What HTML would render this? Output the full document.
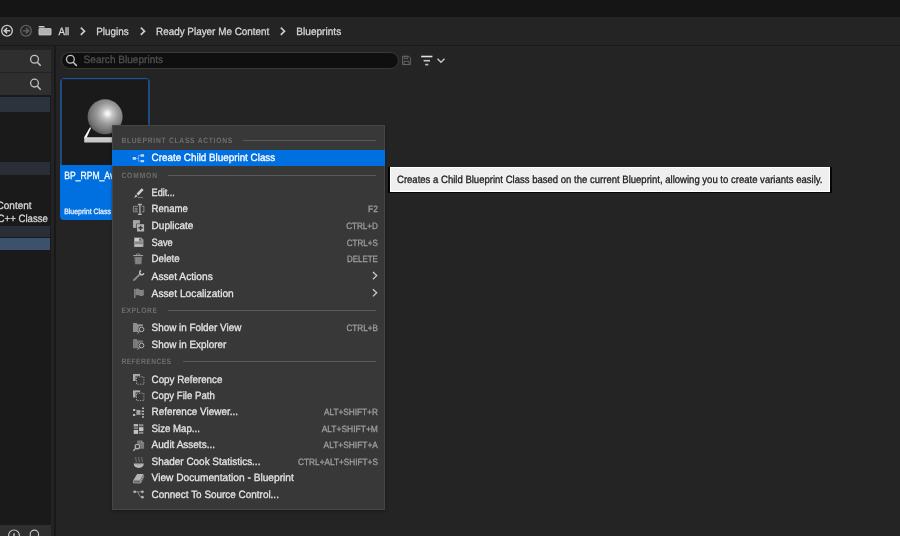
<!DOCTYPE html>
<html lang="en">
<head>
<meta charset="utf-8">
<title>Content Browser</title>
<style>
html,body{margin:0;padding:0;background:#242424;}
body{width:900px;height:536px;overflow:hidden;background:#242424;position:relative;font-family:"Liberation Sans",sans-serif;}
.abs,.t{position:absolute;}
.t{white-space:nowrap;display:block;transform-origin:0 0;-webkit-text-stroke:0.3px;}
.tl{position:absolute;left:0;top:0;width:900px;height:536px;will-change:transform;text-rendering:geometricPrecision;}
#topbar{left:0;top:0;width:900px;height:17px;background:#151515;}
#crumbs{left:0;top:17px;width:900px;height:28px;background:#242424;}
#hsep{left:0;top:45px;width:900px;height:1px;background:#1a1a1a;}
#leftpanel{left:0;top:46px;width:54px;height:490px;background:#232323;}
#tree{left:0;top:95px;width:51px;height:430px;background:#1a1a1a;}
.lrow{left:0;width:51px;background:#2f2f2f;}
.brow{left:0;width:50px;}
#vsep{left:54px;top:46px;width:2px;height:490px;background:#191919;}
#search{left:61.4px;top:52.2px;width:337.2px;height:16.8px;box-sizing:border-box;border:1px solid #393939;border-radius:9px;background:#0f0f0f;}
#tile{left:60px;top:77.6px;width:90.2px;height:142px;border-radius:4px;overflow:hidden;}
#tilebot{left:0;top:87px;width:90.2px;height:56px;background:#0070e0;}
#thumb{left:0;top:0;width:90.2px;height:87.2px;box-sizing:border-box;background:#1a1a1a;border:2px solid #1f4b7f;border-bottom:0;border-top:1px solid #2a5283;border-radius:4px 4px 0 0;}
#thumbin{left:0;right:0;top:0;height:1px;background:#0a2545;}
#menu{left:112px;top:125px;width:273.2px;height:384.7px;box-sizing:border-box;background:#383838;border:1px solid #464646;box-shadow:0 1px 3px rgba(0,0,0,.35);}
#hl{left:112px;top:149.8px;width:273.2px;height:15.8px;background:#0070e0;}
.hline{height:1px;background:#5a5a5a;}
#tip{left:388.2px;top:166.6px;width:443.6px;height:26.6px;background:#050505;}
#tipin{left:1.5px;top:0.2px;width:440.3px;height:25px;box-sizing:border-box;border:1.3px solid #ffffff;background:#efefef;}
svg{position:absolute;left:0;top:0;overflow:visible;}
</style>
</head>
<body>
<div id="topbar" class="abs"></div>
<div id="crumbs" class="abs"></div>
<div id="hsep" class="abs"></div>
<div id="leftpanel" class="abs"></div>
<div id="tree" class="abs"></div>
<div class="abs lrow" style="top:49.6px;height:22.3px"></div>
<div class="abs lrow" style="top:72.9px;height:21.9px"></div>
<div class="abs brow" style="top:96.7px;height:15.1px;background:#2d333c"></div>
<div class="abs brow" style="top:162.1px;height:12.5px;background:#2a2f37"></div>
<div class="abs brow" style="top:225.5px;height:11.1px;background:#2a2f37"></div>
<div class="abs brow" style="top:237.6px;height:12.1px;background:#3c516b"></div>
<div class="abs lrow" style="top:524.8px;height:11.2px"></div>
<div id="vsep" class="abs"></div>
<div id="search" class="abs"></div>
<div id="tile" class="abs"><div id="thumb" class="abs"><div id="thumbin" class="abs"></div></div><div id="tilebot" class="abs"></div></div>
<svg id="bgicons" width="900" height="536" viewBox="0 0 900 536">
<defs>
<radialGradient id="sph" cx="0.57" cy="0.41" r="0.62" fx="0.57" fy="0.41">
<stop offset="0" stop-color="#ffffff"/><stop offset="0.08" stop-color="#f0f0f0"/><stop offset="0.25" stop-color="#c2c2c2"/><stop offset="0.5" stop-color="#989898"/><stop offset="0.8" stop-color="#767676"/><stop offset="1" stop-color="#565656"/>
</radialGradient>
</defs>
<!-- back -->
<g fill="none" stroke="#c8c8c8" stroke-width="1.35">
<circle cx="7" cy="30.7" r="5.35"/>
<path d="M10.2 30.7H4.8M7.1 28L4.3 30.7L7.1 33.4" stroke-width="1.6"/>
</g>
<!-- forward -->
<g fill="none" stroke="#5e5e5e" stroke-width="1.35">
<circle cx="26" cy="30.7" r="5.35"/>
<path d="M22.8 30.7H28.2M25.9 28L28.7 30.7L25.9 33.4" stroke-width="1.6"/>
</g>
<!-- folder -->
<path d="M38.6 26.7Q38.6 26 39.3 26H43.5Q44.1 26 44.4 26.6L44.9 27.5H38.6Z" fill="#cdcdcd"/>
<rect x="38.9" y="28.5" width="12.2" height="6.5" rx="0.6" fill="#b2b2b2" stroke="#d2d2d2" stroke-width="0.7"/>
<!-- breadcrumb chevrons -->
<g fill="none" stroke="#cacaca" stroke-width="1.7">
<path d="M80.8 27.6L84.5 31.2L80.8 34.8"/>
<path d="M140.8 27.6L144.5 31.2L140.8 34.8"/>
<path d="M280.8 27.6L284.5 31.2L280.8 34.8"/>
</g>
<!-- search icons -->
<g fill="none" stroke="#c2c2c2" stroke-width="1.3">
<circle cx="34.5" cy="59.2" r="3.9"/><path d="M37.3 62.2L40.7 65.8" stroke-width="1.5"/>
<circle cx="34.5" cy="83.1" r="3.9"/><path d="M37.3 86.1L40.7 89.7" stroke-width="1.5"/>
<circle cx="70.4" cy="59.3" r="3.9"/><path d="M73.2 62.3L76.8 65.9" stroke-width="1.5"/>
</g>
<!-- save (dim) -->
<g fill="none" stroke="#666666" stroke-width="0.9">
<path d="M402.5 56.2H408.8L410.6 58V64.6H402.5Z"/>
<rect x="404.2" y="56.4" width="3.6" height="2.2"/>
<rect x="404" y="61.3" width="5" height="3.2"/>
</g>
<!-- filter -->
<g stroke="#e0e0e0" stroke-width="1.6" fill="none">
<path d="M421.1 56.5H432.4"/>
<path d="M423.6 60.7H430" stroke="#c8c8c8"/>
<path d="M425.2 64.6H428.3" stroke="#c0c0c0"/>
</g>
<path d="M437.5 58.8L441 62.3L444.5 58.8" fill="none" stroke="#c8c8c8" stroke-width="1.4"/>
<!-- bottom-left icons -->
<g fill="none" stroke="#c2c2c2" stroke-width="1.2">
<circle cx="14" cy="535.4" r="5.4"/>
<path d="M14 533.2V538" stroke-width="1.5"/>
<circle cx="34.4" cy="534.4" r="4.2"/>
</g>
<!-- thumbnail sphere + platform -->
<path d="M90 127.3L91 127.9L86.6 137.7H83.9Z" fill="#ffffff"/>
<path d="M84.2 137.8H126V142.4H84.2Z" fill="#c9c9c9"/>
<path d="M84.2 137.8H126" stroke="#f4f4f4" stroke-width="0.8"/>
<circle cx="105.1" cy="116.8" r="17.5" fill="url(#sph)"/>

</svg>
<div class="tl">
<span class="t" id="t7" style="left:64px;top:169px;font-size:10.6px;line-height:14px;color:#ffffff;transform:translateX(0.20px) scaleX(0.8119);">BP_RPM_Avatar</span>
<span class="t" id="t8" style="left:64px;top:206px;font-size:7.8px;line-height:11px;color:#e8f0ff;transform:translateX(0.20px) scaleX(0.8906);">Blueprint Class</span>
</div>
<div id="menu" class="abs"></div>
<div id="hl" class="abs"></div>
<div class="abs hline" style="left:243.3px;top:140.1px;width:132.7px"></div>
<div class="abs hline" style="left:168px;top:174.6px;width:208px"></div>
<div class="abs hline" style="left:168.3px;top:310px;width:207.7px"></div>
<div class="abs hline" style="left:183px;top:361px;width:193px"></div>
<div id="tip" class="abs"><div id="tipin" class="abs"></div></div>
<svg id="icons" width="900" height="536" viewBox="0 0 900 536">
<!-- create child -->
<g fill="#b9d8ff">
<rect x="132.7" y="157" width="3.3" height="2.8" rx="0.4"/>
<rect x="140.5" y="154.3" width="3.6" height="2.4" rx="0.3"/>
<rect x="140.5" y="159.9" width="3.6" height="2.4" rx="0.3"/>
</g>
<path d="M136 158.4H138.4M140.5 155.5H138.4V161.1H140.5" fill="none" stroke="#7db8ff" stroke-width="0.8"/>
<!-- edit pencil -->
<path d="M136.5 193.8L141.7 188.2L143.6 190L138.4 195.6Z" fill="#cecece"/>
<path d="M135.9 194.6L137.6 196.2L134 197.9Z" fill="#cecece"/>
<path d="M137.8 197.6H143" stroke="#8f8f8f" stroke-width="0.8"/>
<!-- rename -->
<path d="M138 206.3H133.4V211.8H138M141.8 206.3H143.9V211.8H141.8" fill="none" stroke="#949494" stroke-width="0.9"/>
<rect x="134.6" y="207.8" width="3" height="2.8" fill="#787878"/>
<path d="M137.9 204.5H141.9M137.9 214.3H141.9M139.9 204.5V214.3" stroke="#b0b0b0" stroke-width="1.3" fill="none"/>
<!-- duplicate -->
<rect x="133" y="220.1" width="6.9" height="7.8" fill="#a6a6a6"/>
<rect x="136.4" y="223.6" width="8.2" height="8.4" fill="#383838"/>
<rect x="137" y="224.2" width="7.1" height="7.3" fill="#b2b2b2"/>
<path d="M138.4 227.8H142.7M140.55 225.7V229.9" stroke="#383838" stroke-width="1.4"/>
<!-- save -->
<path d="M134 237.5H141.2L143.5 239.8V247H134Z" fill="#969696"/>
<rect x="134.8" y="238" width="4.2" height="3.2" fill="#cacaca"/>
<rect x="139.4" y="239" width="1.2" height="1.5" fill="#484848"/>
<rect x="135" y="242.2" width="7.4" height="1.6" fill="#848484"/>
<rect x="135" y="244.4" width="7.4" height="2.2" fill="#bebebe"/>
<!-- trash -->
<path d="M133.2 255.6H143.1" stroke="#aaaaaa" stroke-width="1"/>
<path d="M136.6 255V254H139.8V255" stroke="#949494" stroke-width="0.8" fill="none"/>
<path d="M134.4 257H142L141.5 264.3H134.9Z" fill="#767676"/>
<path d="M136.4 257.6V263.6M138.2 257.6V263.6M140 257.6V263.6" stroke="#969696" stroke-width="0.7"/>
<!-- wrench -->
<path d="M134 280L140 274.2" stroke="#8a8a8a" stroke-width="1.9" stroke-linecap="round"/>
<path d="M141.05 270.5A2.2 2.2 0 1 0 143.9 273.35" fill="none" stroke="#bebebe" stroke-width="1.5"/>
<!-- flag -->
<path d="M134 289H135.5V298H134Z" fill="#828282"/>
<path d="M135.5 289.3Q137.4 287.9 139.3 289.4Q141.4 290.8 143.8 289.2V295.2Q141.4 296.8 139.3 295.6Q137.4 294.4 135.5 295.6Z" fill="#828282"/>
<!-- folder search 1 -->
<g>
<path d="M133 323.6Q133 323 133.6 323H136.6L137.6 324.3H142.4Q143 324.3 143 324.9V332.1H133Z" fill="#8e8e8e"/>
<circle cx="141.6" cy="329.4" r="3.3" fill="#383838"/>
<circle cx="141.6" cy="329.4" r="2.3" fill="#3c3c3c" stroke="#bebebe" stroke-width="0.9"/>
<path d="M139.9 331.3L137.6 333.6" stroke="#bebebe" stroke-width="0.9"/>
</g>
<!-- folder search 2 -->
<g>
<path d="M133 339.7Q133 339.1 133.6 339.1H136.6L137.6 340.4H142.4Q143 340.4 143 341V348.2H133Z" fill="#7a7a7a"/>
<circle cx="141.6" cy="345.5" r="3.3" fill="#383838"/>
<circle cx="141.6" cy="345.5" r="2.3" fill="#3c3c3c" stroke="#bebebe" stroke-width="0.9"/>
<path d="M139.9 347.4L137.6 349.7" stroke="#bebebe" stroke-width="0.9"/>
</g>
<!-- copy 1 -->
<g>
<rect x="133" y="374" width="7.1" height="7" fill="#acacac"/>
<rect x="135.6" y="375.9" width="8.8" height="8.8" fill="#383838"/>
<rect x="136.5" y="376.8" width="7.4" height="7.4" fill="none" stroke="#aaaaaa" stroke-width="0.9" stroke-dasharray="1.3 1.2"/>
</g>
<!-- copy 2 -->
<g>
<rect x="133" y="390.4" width="7.1" height="7" fill="#acacac"/>
<rect x="135.6" y="392.3" width="8.8" height="8.8" fill="#383838"/>
<rect x="136.5" y="393.2" width="7.4" height="7.4" fill="none" stroke="#aaaaaa" stroke-width="0.9" stroke-dasharray="1.3 1.2"/>
</g>
<!-- reference viewer -->
<g fill="#bababa">
<rect x="133" y="409" width="2" height="2"/><rect x="133" y="414" width="2" height="2"/>
<rect x="136.4" y="410" width="4" height="4.8" fill="#a4a4a4"/>
<rect x="142" y="407.5" width="2" height="1.5"/><rect x="142" y="410.5" width="2" height="1.5"/><rect x="142" y="413.4" width="2" height="1.5"/><rect x="142" y="416.2" width="2" height="1.5"/>
</g>
<path d="M135 410H136.4M135 415H136.4M140.4 411.3H142M140.4 414H142" stroke="#949494" stroke-width="0.7"/>
<!-- size map -->
<g>
<rect x="133.7" y="424.1" width="4.4" height="2.3" fill="#bebebe"/>
<rect x="139" y="424.1" width="4.4" height="2.3" fill="#868686"/>
<rect x="133.7" y="427.2" width="4.4" height="2" fill="#868686"/>
<rect x="139" y="427.2" width="4.4" height="3.9" fill="#c2c2c2"/>
<rect x="133.7" y="430" width="4.4" height="3.9" fill="#c2c2c2"/>
<rect x="139" y="431.9" width="4.4" height="2" fill="#868686"/>
</g>
<!-- audit -->
<g>
<path d="M137.1 440.4H141.6L144.1 442.9V448.8H137.1Z" fill="#7a7a7a"/>
<path d="M141.6 440.4V442.9H144.1" fill="none" stroke="#969696" stroke-width="0.6"/>
<circle cx="137.4" cy="446.6" r="3.1" fill="#383838"/>
<circle cx="137.4" cy="446.6" r="2.3" fill="#404040" stroke="#bababa" stroke-width="1.1"/>
<path d="M135.7 448.4L133.3 450.8" stroke="#bababa" stroke-width="1.3"/>
</g>
<!-- bowl -->
<g>
<path d="M133.7 463.5H143.8Q143.6 467.9 138.75 467.9Q133.9 467.9 133.7 463.5Z" fill="#bcbcbc"/>
<path d="M135.4 464.7H142.1" stroke="#949494" stroke-width="0.6"/>
<path d="M136 457Q135.2 458.3 136 459.6T136 462.2M139 457Q138.2 458.3 139 459.6T139 462.2M142 457Q141.2 458.3 142 459.6T142 462.2" fill="none" stroke="#868686" stroke-width="0.8"/>
</g>
<!-- book -->
<g>
<path d="M137.1 474H143.6L140.4 480.1H133.5Z" fill="#b4b4b4"/>
<path d="M133.5 480.4H140.4V483H133.5Z" fill="#686868" stroke="#b0b0b0" stroke-width="0.7"/>
<path d="M140.6 483L143.9 476.4M141 480.6L143.7 475" stroke="#b0b0b0" stroke-width="0.7" fill="none"/>
</g>
<!-- source control -->
<g>
<path d="M134.7 491.8H142.4M137.2 491.8Q138.4 491.8 138.8 494Q139.3 497.2 142.4 497.2" fill="none" stroke="#949494" stroke-width="0.8"/>
<circle cx="134.7" cy="491.8" r="1.4" fill="#b2b2b2"/>
<circle cx="142.4" cy="491.8" r="1.4" fill="#b2b2b2"/>
<circle cx="142.4" cy="497.2" r="1.4" fill="#b2b2b2"/>
</g>
<!-- submenu chevrons -->
<g fill="none" stroke="#cacaca" stroke-width="1.3">
<path d="M372.9 272L376.7 275.6L372.9 279.2"/>
<path d="M372.9 289.2L376.7 292.8L372.9 296.4"/>
</g>

</svg>
<div class="tl">
<span class="t" id="t0" style="left:58px;top:25px;font-size:10.6px;line-height:14px;color:#d6d6d6;transform:translateX(0.50px) scaleX(0.9082);">All</span>
<span class="t" id="t1" style="left:96px;top:25px;font-size:10.6px;line-height:14px;color:#d6d6d6;transform:translateX(0.20px) scaleX(0.9353);">Plugins</span>
<span class="t" id="t2" style="left:156px;top:25px;font-size:10.6px;line-height:14px;color:#d6d6d6;transform:translateX(0.00px) scaleX(0.9340);">Ready Player Me Content</span>
<span class="t" id="t3" style="left:296px;top:25px;font-size:10.6px;line-height:14px;color:#d6d6d6;transform:translateX(0.30px) scaleX(0.9531);">Blueprints</span>
<span class="t" id="t4" style="left:83px;top:53px;font-size:10.6px;line-height:14px;color:#505050;transform:translateX(0.60px) scaleX(0.9507);">Search Blueprints</span>
<span class="t" id="t5" style="left:-4px;top:199px;font-size:10.6px;line-height:14px;color:#d6d6d6;transform:translateX(0.60px) scaleX(0.9432);">Content</span>
<span class="t" id="t6" style="left:-3px;top:212px;font-size:10.6px;line-height:14px;color:#d6d6d6;transform:translateX(0.60px) scaleX(0.9086);">C++ Classe</span>
<span class="t" id="t9" style="left:397px;top:173px;font-size:10.6px;line-height:14px;color:#1c1c1c;transform:translateX(0.00px) scaleX(0.9002);">Creates a Child Blueprint Class based on the current Blueprint, allowing you to create variants easily.</span>
<span class="t" id="t10" style="left:151px;top:151px;font-size:10.6px;line-height:14px;color:#ffffff;transform:translateX(0.60px) scaleX(0.9288);">Create Child Blueprint Class</span>
<span class="t" id="t11" style="left:151px;top:186px;font-size:10.6px;line-height:14px;color:#e4e4e4;transform:translateX(0.60px) scaleX(0.8600);">Edit...</span>
<span class="t" id="t12" style="left:151px;top:202px;font-size:10.6px;line-height:14px;color:#e4e4e4;transform:translateX(0.60px) scaleX(0.9039);">Rename</span>
<span class="t" id="t13" style="left:368px;top:203px;font-size:9.2px;line-height:13px;color:#9e9e9e;transform:translateX(0.10px) scaleX(0.9127);">F2</span>
<span class="t" id="t14" style="left:151px;top:219px;font-size:10.6px;line-height:14px;color:#e4e4e4;transform:translateX(0.60px) scaleX(0.9463);">Duplicate</span>
<span class="t" id="t15" style="left:346px;top:220px;font-size:9.2px;line-height:13px;color:#9e9e9e;transform:translateX(0.15px) scaleX(0.8819);">CTRL+D</span>
<span class="t" id="t16" style="left:151px;top:236px;font-size:10.6px;line-height:14px;color:#e4e4e4;transform:translateX(0.60px) scaleX(0.8776);">Save</span>
<span class="t" id="t17" style="left:346px;top:237px;font-size:9.2px;line-height:13px;color:#9e9e9e;transform:translateX(0.70px) scaleX(0.8790);">CTRL+S</span>
<span class="t" id="t18" style="left:151px;top:252px;font-size:10.6px;line-height:14px;color:#e4e4e4;transform:translateX(0.60px) scaleX(0.9176);">Delete</span>
<span class="t" id="t19" style="left:347px;top:253px;font-size:9.2px;line-height:13px;color:#9e9e9e;transform:translateX(0.07px) scaleX(0.8623);">DELETE</span>
<span class="t" id="t20" style="left:151px;top:270px;font-size:10.6px;line-height:14px;color:#e4e4e4;transform:translateX(0.60px) scaleX(0.9624);">Asset Actions</span>
<span class="t" id="t21" style="left:151px;top:287px;font-size:10.6px;line-height:14px;color:#e4e4e4;transform:translateX(0.60px) scaleX(0.9626);">Asset Localization</span>
<span class="t" id="t22" style="left:151px;top:321px;font-size:10.6px;line-height:14px;color:#e4e4e4;transform:translateX(0.60px) scaleX(0.9307);">Show in Folder View</span>
<span class="t" id="t23" style="left:346px;top:322px;font-size:9.2px;line-height:13px;color:#9e9e9e;transform:translateX(0.43px) scaleX(0.8864);">CTRL+B</span>
<span class="t" id="t24" style="left:151px;top:338px;font-size:10.6px;line-height:14px;color:#e4e4e4;transform:translateX(0.60px) scaleX(0.9314);">Show in Explorer</span>
<span class="t" id="t25" style="left:151px;top:373px;font-size:10.6px;line-height:14px;color:#e4e4e4;transform:translateX(0.60px) scaleX(0.9247);">Copy Reference</span>
<span class="t" id="t26" style="left:151px;top:389px;font-size:10.6px;line-height:14px;color:#e4e4e4;transform:translateX(0.60px) scaleX(0.9096);">Copy File Path</span>
<span class="t" id="t27" style="left:151px;top:405px;font-size:10.6px;line-height:14px;color:#e4e4e4;transform:translateX(0.60px) scaleX(0.9364);">Reference Viewer...</span>
<span class="t" id="t28" style="left:323px;top:406px;font-size:9.2px;line-height:13px;color:#9e9e9e;transform:translateX(0.90px) scaleX(0.8988);">ALT+SHIFT+R</span>
<span class="t" id="t29" style="left:151px;top:422px;font-size:10.6px;line-height:14px;color:#e4e4e4;transform:translateX(0.60px) scaleX(0.9113);">Size Map...</span>
<span class="t" id="t30" style="left:321px;top:423px;font-size:9.2px;line-height:13px;color:#9e9e9e;transform:translateX(0.63px) scaleX(0.9210);">ALT+SHIFT+M</span>
<span class="t" id="t31" style="left:151px;top:438px;font-size:10.6px;line-height:14px;color:#e4e4e4;transform:translateX(0.60px) scaleX(0.9443);">Audit Assets...</span>
<span class="t" id="t32" style="left:323px;top:439px;font-size:9.2px;line-height:13px;color:#9e9e9e;transform:translateX(0.59px) scaleX(0.9116);">ALT+SHIFT+A</span>
<span class="t" id="t33" style="left:151px;top:455px;font-size:10.6px;line-height:14px;color:#e4e4e4;transform:translateX(0.60px) scaleX(0.9379);">Shader Cook Statistics...</span>
<span class="t" id="t34" style="left:298px;top:456px;font-size:9.2px;line-height:13px;color:#9e9e9e;transform:translateX(0.12px) scaleX(0.8970);">CTRL+ALT+SHIFT+S</span>
<span class="t" id="t35" style="left:151px;top:471px;font-size:10.6px;line-height:14px;color:#e4e4e4;transform:translateX(0.60px) scaleX(0.9595);">View Documentation - Blueprint</span>
<span class="t" id="t36" style="left:151px;top:488px;font-size:10.6px;line-height:14px;color:#e4e4e4;transform:translateX(0.60px) scaleX(0.9371);">Connect To Source Control...</span>
<span class="t" id="t37" style="left:121px;top:135px;font-size:7.8px;line-height:11px;color:#6e6e6e;letter-spacing:0.848px;transform:translateX(0.40px) scaleX(0.86);font-weight:700;-webkit-text-stroke:0;">BLUEPRINT CLASS ACTIONS</span>
<span class="t" id="t38" style="left:121px;top:170px;font-size:7.8px;line-height:11px;color:#6e6e6e;letter-spacing:1.001px;transform:translateX(0.40px) scaleX(0.86);font-weight:700;-webkit-text-stroke:0;">COMMON</span>
<span class="t" id="t39" style="left:121px;top:305px;font-size:7.8px;line-height:11px;color:#6e6e6e;letter-spacing:0.688px;transform:translateX(0.40px) scaleX(0.86);font-weight:700;-webkit-text-stroke:0;">EXPLORE</span>
<span class="t" id="t40" style="left:121px;top:356px;font-size:7.8px;line-height:11px;color:#6e6e6e;letter-spacing:0.499px;transform:translateX(0.40px) scaleX(0.86);font-weight:700;-webkit-text-stroke:0;">REFERENCES</span>
</div>
</body>
</html>
